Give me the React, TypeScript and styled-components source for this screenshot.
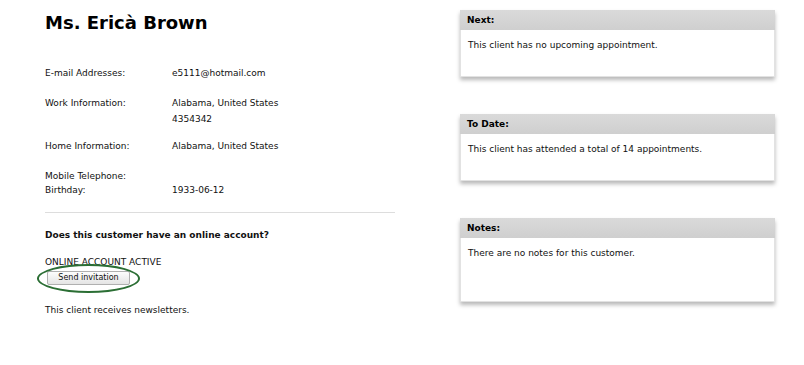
import React from "react";
import styled, { createGlobalStyle } from "styled-components";

const GlobalStyle = createGlobalStyle`
  html, body {
    margin: 0;
    padding: 0;
    background: #ffffff;
  }
  body {
    font-family: "DejaVu Sans", Verdana, sans-serif;
    font-size: 9px;
    color: #111;
  }
`;

const Page = styled.div`
  width: 804px;
  height: 365px;
  display: flex;
  flex-direction: row;
  align-items: flex-start;
  padding-left: 45px;
  box-sizing: border-box;
`;

const LeftColumn = styled.div`
  width: 350px;
  display: flex;
  flex-direction: column;
`;

const RightColumn = styled.div`
  width: 315px;
  margin-left: 65px;
  padding-top: 10px;
  display: flex;
  flex-direction: column;
  gap: 37px;
`;

const ClientName = styled.h1`
  margin: 11px 0 0;
  font-size: 18px;
  font-weight: bold;
  line-height: 24px;
  color: #000;
`;

const InfoGrid = styled.div`
  margin-top: 31px;
  display: grid;
  grid-template-columns: 127px 1fr;
`;

const InfoRow = styled.div<{ gapAfter: number; rowHeight: number }>`
  display: contents;

  & > span {
    line-height: ${(p) => p.rowHeight}px;
    margin-bottom: ${(p) => p.gapAfter}px;
  }
`;

const Label = styled.span``;

const Value = styled.span`
  display: flex;
  flex-direction: column;
  gap: 1px;
`;

const Divider = styled.hr`
  margin: 14px 0 0;
  border: none;
  border-top: 1px solid #ddd;
`;

const Question = styled.div`
  margin-top: 15px;
  font-weight: bold;
  line-height: 15px;
`;

const Status = styled.div`
  margin-top: 13px;
  line-height: 12px;
`;

const ButtonWrap = styled.div`
  position: relative;
  width: 83px;
  margin: 3px 0 0 2px;
`;

const InviteButton = styled.button`
  display: block;
  width: 83px;
  height: 14px;
  padding: 0;
  font-family: "DejaVu Sans", Verdana, sans-serif;
  font-size: 8px;
  line-height: 12px;
  color: #111;
  background: linear-gradient(#fdfdfd, #e4e4e4);
  border: 1px solid #b0b0b0;
  border-radius: 2px;
`;

const Highlight = styled.div`
  position: absolute;
  left: -10px;
  top: -7px;
  width: 99px;
  height: 25px;
  border: 2.5px solid #2b6e34;
  border-radius: 50%;
  pointer-events: none;
`;

const Newsletter = styled.div`
  margin-top: 19px;
  line-height: 12px;
`;

const Panel = styled.div<{ bodyHeight: number }>`
  display: flex;
  flex-direction: column;
  box-shadow: 0 3px 4px rgba(0, 0, 0, 0.28);

  & > div:last-child {
    height: ${(p) => p.bodyHeight}px;
  }
`;

const PanelHeader = styled.div`
  height: 20px;
  padding-left: 7px;
  display: flex;
  align-items: center;
  font-weight: bold;
  color: #000;
  background: linear-gradient(#dadada, #cfcfcf);
`;

const PanelBody = styled.div`
  padding: 10px 7px;
  box-sizing: border-box;
  background: #fff;
  border: 1px solid #e2e2e2;
  border-top: none;
`;

const info = [
  { label: "E-mail Addresses:", values: ["e5111@hotmail.com"], gapAfter: 15, rowHeight: 15 },
  {
    label: "Work Information:",
    values: ["Alabama, United States", "4354342"],
    gapAfter: 12,
    rowHeight: 15,
  },
  { label: "Home Information:", values: ["Alabama, United States"], gapAfter: 16, rowHeight: 15 },
  { label: "Mobile Telephone:", values: [""], gapAfter: 0, rowHeight: 13 },
  { label: "Birthday:", values: ["1933-06-12"], gapAfter: 0, rowHeight: 15 },
];

const panels = [
  { title: "Next:", text: "This client has no upcoming appointment.", height: 47 },
  {
    title: "To Date:",
    text: "This client has attended a total of 14 appointments.",
    height: 47,
  },
  { title: "Notes:", text: "There are no notes for this customer.", height: 64 },
];

const App = () => {
  return (
    <>
      <GlobalStyle />
      <Page>
        <LeftColumn>
          <ClientName>Ms. Ericà Brown</ClientName>
          <InfoGrid>
            {info.map(({ label, values, gapAfter, rowHeight }) => (
              <InfoRow key={label} gapAfter={gapAfter} rowHeight={rowHeight}>
                <Label>{label}</Label>
                <Value>
                  {values.map((v, i) => (
                    <span key={i}>{v}</span>
                  ))}
                </Value>
              </InfoRow>
            ))}
          </InfoGrid>
          <Divider />
          <Question>Does this customer have an online account?</Question>
          <Status>ONLINE ACCOUNT ACTIVE</Status>
          <ButtonWrap>
            <InviteButton>Send invitation</InviteButton>
            <Highlight />
          </ButtonWrap>
          <Newsletter>This client receives newsletters.</Newsletter>
        </LeftColumn>
        <RightColumn>
          {panels.map((p) => (
            <Panel key={p.title} bodyHeight={p.height}>
              <PanelHeader>{p.title}</PanelHeader>
              <PanelBody>{p.text}</PanelBody>
            </Panel>
          ))}
        </RightColumn>
      </Page>
    </>
  );
};

export default App;
